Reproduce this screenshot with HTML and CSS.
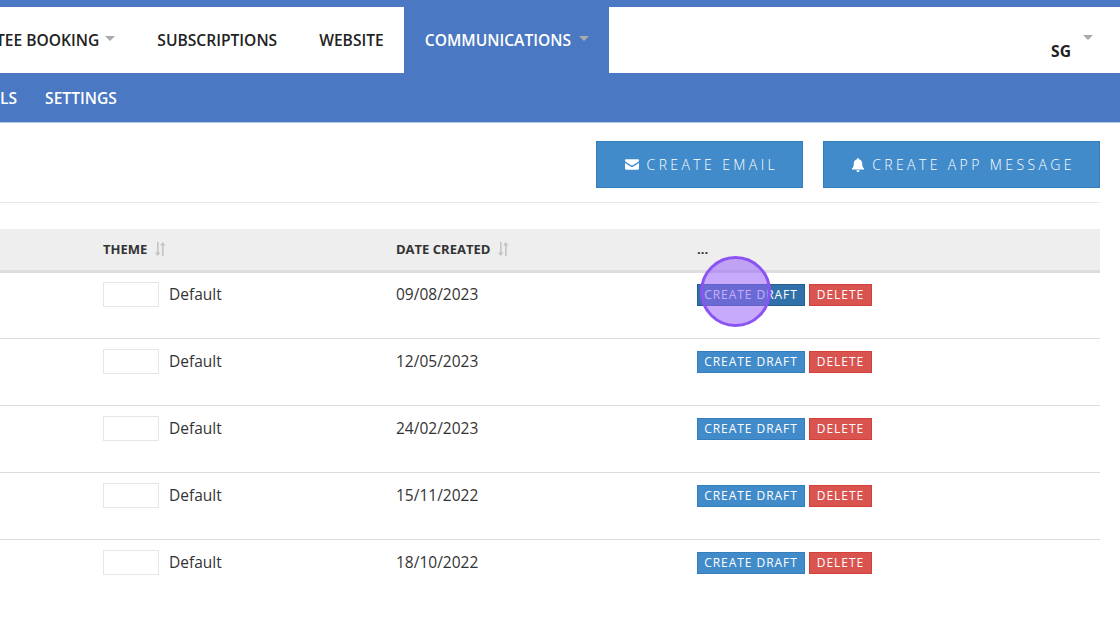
FILE: index.html
```html
<!DOCTYPE html>
<html lang="en">
<head>
    <meta charset="UTF-8">
    <meta name="viewport" content="width=device-width, initial-scale=1.0">
    <title>Communications</title>
    <link rel="stylesheet" href="styles.css">
</head>
<body>
    <header class="topbar">
        <nav class="mainnav">
            <a class="nav-item nav-first">TEE BOOKING <span class="caret"></span></a>
            <a class="nav-item">SUBSCRIPTIONS</a>
            <a class="nav-item">WEBSITE</a>
            <a class="nav-item active">COMMUNICATIONS <span class="caret"></span></a>
            <div class="user">
                <span class="user-name">SG</span>
                <span class="caret user-caret"></span>
            </div>
        </nav>
        <nav class="subnav">
            <a>LS</a>
            <a>SETTINGS</a>
        </nav>
    </header>

    <main>
        <div class="toolbar">
            <button class="btn-big">
                <svg class="icon" viewBox="0 0 16 12"><path d="M1.2 0h13.6C15.5 0 16 .6 16 1.2c0 .8-.5 1.4-1.1 1.8L8.8 6.9c-.5.3-1.1.3-1.6 0L1.100 3C.5 2.600 0 2 0 1.200 0 .6.5 0 1.200 0zM0 4.300l6.800 4.200c.8.400 1.600.400 2.400 0L16 4.300v6.400c0 .7-.6 1.300-1.200 1.300H1.200C.6 12 0 11.400 0 10.700z"/></svg>
                CREATE EMAIL
            </button>
            <button class="btn-big">
                <svg class="icon icon-bell" viewBox="0 0 12 14"><path d="M6 0c.5 0 .9.400.9.900v.4C9 1.700 10.200 3.400 10.200 5.400c0 3 .7 3.900 1.800 5.100v.9H0v-.9c1.100-1.200 1.800-2.100 1.800-5.100 0-2 1.200-3.700 3.300-4.100V.9C5.100.4 5.500 0 6 0zM4.400 12.200h3.200C7.600 13.200 6.900 14 6 14s-1.600-.8-1.600-1.800z"/></svg>
                CREATE APP MESSAGE
            </button>
        </div>
        <hr class="divider">

        <table class="list">
            <thead>
                <tr>
                    <th class="col-name"></th>
                    <th class="col-theme">THEME <svg class="sort" viewBox="0 0 12 14"><path d="M3 0h1.600v10.500H6.500L3.800 14 1 10.500h2zM8 3.500H6L8.700 0l2.800 3.500H9.600V14H8z"/></svg></th>
                    <th class="col-date">DATE CREATED <svg class="sort" viewBox="0 0 12 14"><path d="M3 0h1.600v10.500H6.500L3.800 14 1 10.500h2zM8 3.500H6L8.700 0l2.800 3.500H9.600V14H8z"/></svg></th>
                    <th class="col-actions">...</th>
                </tr>
            </thead>
            <tbody>
                <tr>
                    <td></td>
                    <td><div class="theme"><span class="swatch"></span>Default</div></td>
                    <td class="date">09/08/2023</td>
                    <td><div class="actions"><button class="btn-draft hover">CREATE DRAFT</button><button class="btn-delete">DELETE</button></div></td>
                </tr>
                <tr>
                    <td></td>
                    <td><div class="theme"><span class="swatch"></span>Default</div></td>
                    <td class="date">12/05/2023</td>
                    <td><div class="actions"><button class="btn-draft">CREATE DRAFT</button><button class="btn-delete">DELETE</button></div></td>
                </tr>
                <tr>
                    <td></td>
                    <td><div class="theme"><span class="swatch"></span>Default</div></td>
                    <td class="date">24/02/2023</td>
                    <td><div class="actions"><button class="btn-draft">CREATE DRAFT</button><button class="btn-delete">DELETE</button></div></td>
                </tr>
                <tr>
                    <td></td>
                    <td><div class="theme"><span class="swatch"></span>Default</div></td>
                    <td class="date">15/11/2022</td>
                    <td><div class="actions"><button class="btn-draft">CREATE DRAFT</button><button class="btn-delete">DELETE</button></div></td>
                </tr>
                <tr class="last">
                    <td></td>
                    <td><div class="theme"><span class="swatch"></span>Default</div></td>
                    <td class="date">18/10/2022</td>
                    <td><div class="actions"><button class="btn-draft">CREATE DRAFT</button><button class="btn-delete">DELETE</button></div></td>
                </tr>
            </tbody>
        </table>
    </main>

    <!-- click marker from the recording -->
    <div class="click-marker"></div>
</body>
</html>
```

FILE: styles.css
```css
:root {
    --brand: #4a78c2;
    --button: #428bca;
    --text: #333;
}

* {
    box-sizing: border-box;
}

body {
    margin: 0;
    height: 626px;
    overflow: hidden;
    position: relative;
    background: #fff;
    color: var(--text);
    font-family: "Open Sans", sans-serif;
}

.topbar {
    background: var(--brand);
    padding-top: 7px;
    border-bottom: 1px solid #b5c8e6;
    height: 123px;
}

.mainnav {
    display: flex;
    height: 66px;
    background: #fff;
    align-items: stretch;
}

.nav-item {
    display: flex;
    align-items: center;
    gap: 6px;
    padding: 0 21px;
    font-size: 15.600px;
    font-weight: 600;
    color: #222;
}

.nav-first {
    padding-left: 0;
    padding-right: 21px;
    margin-left: -4px;
}

.nav-item.active {
    background: var(--brand);
    color: #fff;
    width: 205px;
    gap: 8px;
    margin-left: -1px;
}

.caret {
    display: inline-block;
    width: 0;
    height: 0;
    margin-top: -3px;
    border-left: 5px solid transparent;
    border-right: 5px solid transparent;
    border-top: 5px solid #aaa;
}

.user {
    flex: 1;
    display: flex;
    justify-content: flex-end;
    padding-right: 39px;
    padding-top: 33px;
}

.user-name {
    font-size: 15.600px;
    font-weight: 700;
    line-height: 22px;
    color: #222;
}

.user-caret {
    margin: -5px 0 0 0;
    position: relative;
    left: 12px;
}

.subnav {
    display: flex;
    gap: 28px;
    height: 49px;
    align-items: center;
    font-size: 15.600px;
    font-weight: 600;
    color: #fff;
}

.toolbar {
    display: flex;
    justify-content: flex-end;
    gap: 20px;
    padding: 18px 20px 0 0;
}

.btn-big {
    height: 47px;
    padding: 0 24px 0 28px;
    background: var(--button);
    border: 1px solid #357ebd;
    color: #fff;
    font-family: inherit;
    font-size: 14px;
    font-weight: 300;
    letter-spacing: 3.400px;
    display: flex;
    align-items: center;
    gap: 8px;
    white-space: nowrap;
}

.icon {
    width: 14px;
    height: 11px;
    fill: #fff;
}

.icon-bell {
    width: 12px;
    height: 14px;
}

.divider {
    margin: 14px 20px 0 0;
    border: 0;
    border-top: 1px solid #e8e8e8;
}

.list {
    margin-top: 26px;
    width: 1100px;
    border-collapse: collapse;
    table-layout: fixed;
    font-size: 15.500px;
}

.list th {
    height: 42px;
    padding: 0;
    background: #eee;
    border-bottom: 3px solid #ddd;
    text-align: left;
    font-size: 13px;
    font-weight: 700;
    white-space: nowrap;
}

.col-name {
    width: 103px;
}

.col-theme {
    width: 293px;
}

.col-date {
    width: 301px;
}

.sort {
    width: 12px;
    height: 14px;
    fill: #c4c4c4;
    margin-left: 3px;
    vertical-align: -2px;
}

.list td {
    height: 67px;
    padding: 10px 0 0;
    vertical-align: top;
    border-bottom: 1px solid #ddd;
    line-height: 22px;
}

.list td.date {
    padding-top: 11px;
}

.list tbody tr:first-child td {
    padding-top: 9px;
}

.list tbody tr:first-child td.date {
    padding-top: 10px;
}

.list .last td {
    border-bottom: 0;
}

.theme {
    display: flex;
    align-items: center;
    gap: 10px;
    height: 25px;
}

.swatch {
    width: 56px;
    height: 25px;
    background: #fff;
    border: 1px solid #e6e6e6;
}

.actions {
    display: flex;
    gap: 4px;
    height: 22px;
    margin-top: 2px;
}

.actions button {
    height: 22px;
    padding: 0;
    font-family: inherit;
    font-size: 12px;
    letter-spacing: 0.950px;
    color: #fff;
    white-space: nowrap;
}

.btn-draft {
    width: 108px;
    background: var(--button);
    border: 1px solid #357ebd;
}

.btn-draft.hover {
    background: #3071a9;
    border-color: #285e8e;
}

.btn-delete {
    width: 63px;
    background: #d9534f;
    border: 1px solid #d43f3a;
}

.click-marker {
    position: absolute;
    left: 700px;
    top: 256px;
    width: 71px;
    height: 71px;
    border-radius: 50%;
    background: rgba(155, 100, 250, 0.55);
    border: 3px solid #8b54f2;
}
```
